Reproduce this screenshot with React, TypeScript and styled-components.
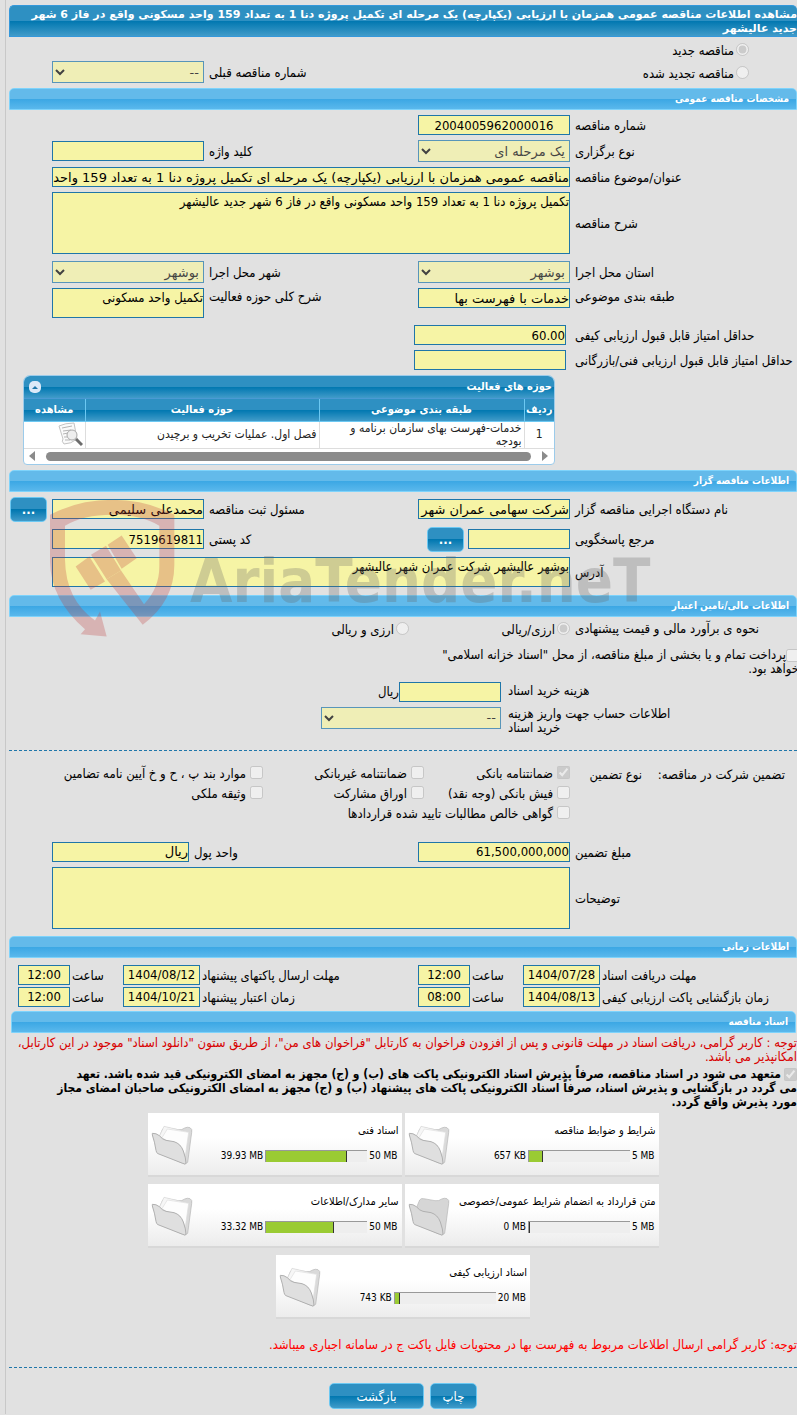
import React from 'react';
import styled, { createGlobalStyle, css } from 'styled-components';

const GlobalStyle = createGlobalStyle`
  * { box-sizing: border-box; }
  body {
    margin: 0;
    background: #e1e1e1;
    color: #000;
    font-family: 'DejaVu Sans Condensed', 'DejaVu Sans', sans-serif;
    font-size: 13px;
    line-height: 14px;
    overflow-x: hidden;
  }
  button, input, select, textarea { font-family: inherit; }
  p { margin: 0; }
`;

const darkGradient = 'linear-gradient(#2e90c2 0 50%, #0077b0 50%, #419bc9)';
const lightGradient = 'linear-gradient(#63baea 0 50%, #3ba7e4 50%, #5ab8ec)';

const Page = styled.main`
  margin-left: 5px;
  padding: 5px 0 5px 3px;
  border-left: 1px solid #c8c8c8;
`;

const PageTitle = styled.h1`
  margin: 0;
  padding: 2px 0 0;
  min-height: 32px;
  border: 1px solid #3498db;
  border-width: 1px 0 1px 1px;
  border-radius: 5px 5px 0 0;
  background: ${darkGradient};
  color: #fff;
  font-family: 'DejaVu Sans', sans-serif;
  font-size: 11px;
  line-height: 14px;
`;

const SectionTitle = styled.h2<{ $inset?: boolean }>`
  margin: ${p => (p.$inset ? '0 1px 0 2px' : '0')};
  height: 22px;
  padding: 0 7px;
  border: 1px solid #7ed3fb;
  border-radius: 5px 5px 0 0;
  background: ${lightGradient};
  color: #fff;
  font-size: 10px;
  line-height: 20px;
`;

const Stack = styled.div<{ $top?: number; $bottom?: number; $gap?: number }>`
  position: relative;
  display: flex;
  flex-direction: column;
  gap: ${p => p.$gap ?? 5}px;
  padding: ${p => p.$top ?? 5}px 0 ${p => p.$bottom ?? 5}px;
`;

const FormRow = styled.div<{ $align?: string; $after?: boolean }>`
  display: grid;
  grid-template-columns: 222px 152px minmax(0, 1fr) 152px 38px;
  column-gap: 5px;
  align-items: ${p => p.$align ?? 'center'};
  margin-bottom: ${p => (p.$after ? 2 : 0)}px;
`;

const Label = styled.label`
  text-align: left;
  padding-top: 2px;
`;

const control = css`
  width: 100%;
  margin: 0;
  border: 1px solid #1f76a9;
  border-radius: 0;
  background: #f6f4a5;
  color: #000;
`;

const Input = styled.input<{ $center?: boolean; $number?: boolean }>`
  ${control}
  display: block;
  height: 20px;
  padding: 1px 0;
  font-family: ${p => (p.$number ? 'inherit' : "'DejaVu Sans', sans-serif")};
  font-size: 13px;
  text-align: ${p => (p.$center ? 'center' : 'right')};
`;

const TextArea = styled.textarea<{ $tall?: boolean; $wide?: boolean }>`
  ${control}
  display: block;
  height: ${p => (p.$tall ? 62 : 30)}px;
  padding: 1px 0;
  resize: none;
  overflow: hidden;
  font-size: 13px;
  line-height: 15px;
  grid-column: ${p => (p.$wide ? 'span 3' : 'auto')};
`;

const WideInput = styled(Input)`
  grid-column: span 3;
`;

const ScoreInput = styled(Input)`
  margin-right: 4px;
`;

const Select = styled.select`
  ${control}
  display: block;
  height: 22px;
  font-family: 'DejaVu Sans', sans-serif;
  font-size: 13px;
`;

const ModeRow = styled.div<{ $height: number }>`
  display: flex;
  align-items: center;
  justify-content: space-between;
  min-height: ${p => p.$height}px;
  padding: 0 48px 0 43px;
`;

const Option = styled.label<{ $gap?: number; $full?: boolean }>`
  display: flex;
  align-items: center;
  gap: ${p => p.$gap ?? 2}px;
  grid-column: ${p => (p.$full ? '1 / -1' : 'auto')};
  white-space: nowrap;
`;

const Tick = styled.input`
  flex: none;
  width: 13px;
  height: 13px;
  margin: 0;
`;

const OptionText = styled.span`
  padding-top: 3px;
`;

const PreviousField = styled.div`
  display: grid;
  grid-template-columns: auto 152px;
  gap: 5px;
  align-items: center;
`;

const Button = styled.button<{ $width: number }>`
  width: ${p => p.$width}px;
  height: 26px;
  padding: 2px 0 0;
  border: 1px solid #6cc8f2;
  border-radius: 5px;
  background: ${darkGradient};
  color: #fff;
  font-size: 13px;
`;

const MoreButton = styled(Button)`
  height: 25px;
  padding: 0;
  font-weight: bold;
`;

const InputWithButton = styled.div`
  display: grid;
  grid-template-columns: 102px 37px;
  gap: 4px;
  align-items: center;
`;

const TableBox = styled.section`
  margin: 0 242px 0 14px;
  border: 1px solid #9ccbea;
  border-radius: 7px 7px 4px 4px;
  background: #fff;
  overflow: hidden;
`;

const TableTitle = styled.header`
  display: flex;
  align-items: center;
  justify-content: space-between;
  height: 23px;
  padding: 0 2px 0 5px;
  border-bottom: 1px solid #4a9ad4;
  background: ${darkGradient};
  color: #fff;
  font-size: 11px;
  font-weight: bold;
`;

const Collapse = styled.button`
  display: grid;
  place-items: center;
  width: 12px;
  height: 12px;
  padding: 0;
  border: 0;
  border-radius: 5px;
  background: #dce9f8;
`;

const Table = styled.table`
  width: 100%;
  table-layout: fixed;
  border-collapse: collapse;
  color: #222;
  font-size: 12px;
  line-height: 13px;
  th {
    height: 22px;
    padding: 0 1px;
    border-bottom: 1px solid #6cc8f2;
    background: ${darkGradient};
    color: #fff;
    font-size: 11px;
  }
  td {
    height: 27px;
    padding: 0 2px;
    border-bottom: 1px solid #ddd;
  }
  th + th { border-right: 1px solid #6cc8f2; }
  td + td { border-right: 1px solid #ddd; }
`;

const NumberCell = styled.td`
  text-align: center;
`;

const ViewCell = styled.td`
  svg {
    display: block;
  }
`;

const ScrollBar = styled.div`
  display: flex;
  align-items: center;
  gap: 11px;
  height: 15px;
  padding: 0 6px 0 5px;
`;

const ScrollThumb = styled.div`
  flex: 1;
  height: 9px;
  border-radius: 5px;
  background: #8b8b8b;
`;

const ScrollArrow = styled.span<{ $left?: boolean }>`
  border: solid transparent;
  border-width: 5px 0;
  ${p => (p.$left ? 'border-right: 6px solid #8b8b8b;' : 'border-left: 6px solid #8b8b8b;')}
`;

const Watermark = styled.div`
  position: absolute;
  z-index: 2;
  top: 1px;
  left: 31px;
  display: flex;
  align-items: flex-start;
  opacity: 0.27;
  pointer-events: none;
  direction: ltr;
`;

const WatermarkText = styled.span`
  margin: 56px 0 0 10px;
  color: #646464;
  font: bold 61px/63px 'DejaVu Sans Condensed', sans-serif;
`;

const EstimateRow = styled.div`
  display: grid;
  grid-template-columns: 222px 156px auto;
  column-gap: 5px;
  justify-content: start;
  align-items: center;
  min-height: 23px;
`;

const TreasuryNote = styled.label`
  display: block;
  width: 367px;
  margin: 5px -2px 1px 0;
  input { vertical-align: bottom; }
`;

const FeeRow = styled.div`
  display: grid;
  grid-template-columns: 289px auto auto;
  justify-content: start;
  align-items: start;
  column-gap: 7px;
`;

const FeeLabel = styled(Label)`
  padding: 0 120px 0 0;
`;

const FeeField = styled.div`
  display: flex;
  align-items: center;
`;

const FeeInput = styled(Input)`
  width: 102px;
`;

const AccountSelect = styled(Select)`
  width: 180px;
`;

const DashedLine = styled.hr`
  width: 100%;
  margin: 0;
  border: 0;
  border-top: 1px dashed #1f76a9;
`;

const Guarantee = styled.fieldset`
  display: grid;
  grid-template-columns: 127px 68px auto;
  column-gap: 16px;
  justify-content: start;
  margin: 12px 0 14px;
  padding: 0 12px 0 0;
  border: 0;
`;

const GuaranteeHead = styled.span`
  padding-top: 5px;
  white-space: nowrap;
`;

const GuaranteeOptions = styled.div`
  display: grid;
  grid-template-columns: 146px 161px auto;
  grid-auto-rows: 20px;
  margin-right: -12px;
`;

const UnitField = styled.div`
  display: grid;
  grid-template-columns: 1fr 137px;
  grid-column: span 2;
  column-gap: 5px;
  align-items: center;
`;

const DateRow = styled.div`
  display: grid;
  grid-template-columns: 195px 77px 49px 52px minmax(0, 1fr) 77px 49px 52px;
  column-gap: 2px;
  align-items: center;
  padding-left: 9px;
`;

const RedNote = styled.p<{ $bright?: boolean }>`
  color: ${p => (p.$bright ? '#f00' : '#d80000')};
`;

const Pledge = styled.label`
  display: block;
  font-size: 12px;
  font-weight: bold;
  line-height: 14px;
  input { vertical-align: bottom; margin-left: 3px; }
`;

const Cards = styled.div`
  display: flex;
  flex-wrap: wrap;
  justify-content: center;
  gap: 7px 3px;
  max-width: 520px;
  margin: 1px auto 16px;
`;

const Card = styled.article`
  display: flex;
  justify-content: space-between;
  width: 254px;
  height: 64px;
  border-bottom: 2px solid #d8d8d8;
  background: linear-gradient(#fff 40%, #ececec);
  svg { flex: none; margin: 12px 0 0 2px; }
`;

const CardBody = styled.div`
  flex: 1;
  padding: 11px 3px 0 0;
  white-space: nowrap;
`;

const CardTitle = styled.h3`
  margin: 0 0 11px;
  font-size: 11px;
  font-weight: normal;
  line-height: 14px;
`;

const Usage = styled.div`
  display: flex;
  align-items: center;
  gap: 2px;
  padding-right: 1px;
  font-size: 10px;
`;

const Meter = styled.div`
  width: 102px;
  height: 12px;
  border: solid #999;
  border-width: 1px 0 0 1px;
  background: #eee;
  direction: ltr;
`;

const MeterFill = styled.div`
  height: 100%;
  border-right: 1px solid #333;
  background: #9acb33;
`;

const Actions = styled.footer`
  display: flex;
  justify-content: center;
  gap: 6px;
`;

function Folder({ empty }: { empty?: boolean }) {
  return (
    <svg width="45" height="40" viewBox="8 34 135 120" aria-hidden="true">
      <path
        d="M36 70L46 46Q50 40 58 42L92 48Q104 50 112 43Q120 39 128 42Q136 46 133 57L121 146L112 151L34 118Z"
        fill={empty ? '#d6d6d6' : '#dadada'}
        stroke="#b5b5b5"
        strokeWidth="2"
      />
      {!empty && (
        <>
          <path d="M36 68L50 38L118 54L114 126L96 96L60 82Z" fill="#f6f6f6" stroke="#d4d4d4" strokeWidth="2" />
          <path d="M44 72L60 46L124 56L114 126L96 92L60 82Z" fill="#fdfdfd" stroke="#dedede" strokeWidth="2" />
        </>
      )}
      <path
        d="M15 59Q26 58 36 66Q46 78 56 80L80 84Q100 90 108 112Q116 134 116 150Q112 152 106 149L32 120Q27 118 26 110Q22 84 15 64Z"
        fill={empty ? '#dadada' : '#dfdfdf'}
        stroke="#b0b0b0"
        strokeWidth="3"
      />
    </svg>
  );
}

function ViewIcon() {
  return (
    <svg width="25" height="25" viewBox="0 0 25 25" role="img" aria-label="مشاهده">
      <path d="M1 4q6-3 15-3l3 16q-6 5-13 5-3-3-1-5z" fill="#fafafa" stroke="#c4c4c4" />
      <path d="M4 6l10-2M5 9l8-1M5 12l5-1M6 15l3 0M7 18l5 0" stroke="#b5b5b5" />
      <circle cx="14" cy="13" r="5" fill="#eee" stroke="#aaa" />
      <path d="M18 17l6 6" stroke="#6c6c6c" strokeWidth="3" />
    </svg>
  );
}

function Shield() {
  return (
    <svg width="140" height="147" viewBox="0 220 420 440" aria-hidden="true">
      <g fill="#c03a3a">
        <path d="M30 285Q115 240 217 240T403 285V435Q403 545 308 615L200 478 243 452 312 553Q358 505 358 440V318Q305 285 217 285T75 318V420Q77 540 165 602L180 575 200 650 122 643 135 628Q32 540 30 425Z" />
        <path d="M107 440l41-30 47 75-43 25zM153 405l45-27 45 74-43 26zM203 375l42-28 45 68-45 32z" />
      </g>
    </svg>
  );
}

type FieldProps = { id: string; label: string; value?: string; center?: boolean; number?: boolean };

function Field({ id, label, value = '', center, number }: FieldProps) {
  return (
    <>
      <Label htmlFor={id}>{label}</Label>
      <Input id={id} defaultValue={value} readOnly $center={center} $number={number} />
    </>
  );
}

function SelectField({ id, label, value }: FieldProps) {
  return (
    <>
      <Label htmlFor={id}>{label}</Label>
      <Select id={id} disabled>
        <option>{value}</option>
      </Select>
    </>
  );
}

function Check({ text, checked, full }: { text: string; checked?: boolean; full?: boolean }) {
  return (
    <Option $gap={4} $full={full}>
      <Tick type="checkbox" disabled defaultChecked={checked} />
      <OptionText>{text}</OptionText>
    </Option>
  );
}

const documents = [
  { title: 'شرایط و ضوابط مناقصه', used: '657 KB', limit: '5 MB', percent: 14 },
  { title: 'اسناد فنی', used: '39.93 MB', limit: '50 MB', percent: 80 },
  { title: 'متن قرارداد به انضمام شرایط عمومی/خصوصی', used: '0 MB', limit: '5 MB', percent: 1 },
  { title: 'سایر مدارک/اطلاعات', used: '33.32 MB', limit: '50 MB', percent: 67 },
  { title: 'اسناد ارزیابی کیفی', used: '743 KB', limit: '20 MB', percent: 5 },
];

export default function App() {
  return (
    <Page dir="rtl" lang="fa">
      <GlobalStyle />
      <PageTitle>
        مشاهده اطلاعات مناقصه عمومی همزمان با ارزیابی (یکپارچه) یک مرحله ای تکمیل پروژه دنا 1 به تعداد 159 واحد مسکونی واقع در فاز 6 شهر جدید عالیشهر
      </PageTitle>
      <ModeRow $height={24}>
        <Option>
          <Tick type="radio" name="mode" disabled defaultChecked />
          <OptionText>مناقصه جدید</OptionText>
        </Option>
      </ModeRow>
      <ModeRow $height={22}>
        <Option>
          <Tick type="radio" name="mode" disabled />
          <OptionText>مناقصه تجدید شده</OptionText>
        </Option>
        <PreviousField>
          <SelectField id="previous" label="شماره مناقصه قبلی" value="--" />
        </PreviousField>
      </ModeRow>

      <Stack $bottom={0}>
        <SectionTitle>مشخصات مناقصه عمومی</SectionTitle>
      </Stack>
      <Stack>
        <FormRow>
          <Field id="number" label="شماره مناقصه" value="2004005962000016" center number />
        </FormRow>
        <FormRow>
          <SelectField id="kind" label="نوع برگزاری" value="یک مرحله ای" />
          <Field id="keyword" label="کلید واژه" />
        </FormRow>
        <FormRow>
          <Label htmlFor="title">عنوان/موضوع مناقصه</Label>
          <WideInput id="title" readOnly defaultValue="مناقصه عمومی همزمان با ارزیابی (یکپارچه) یک مرحله ای تکمیل پروژه دنا 1 به تعداد 159 واحد" />
        </FormRow>
        <FormRow $after>
          <Label htmlFor="description">شرح مناقصه</Label>
          <TextArea id="description" $tall $wide readOnly defaultValue="تکمیل پروژه دنا 1 به تعداد 159 واحد مسکونی واقع در فاز 6 شهر جدید عالیشهر" />
        </FormRow>
        <FormRow>
          <SelectField id="province" label="استان محل اجرا" value="بوشهر" />
          <SelectField id="city" label="شهر محل اجرا" value="بوشهر" />
        </FormRow>
        <FormRow $align="start" $after>
          <Field id="category" label="طبقه بندی موضوعی" value="خدمات با فهرست بها" />
          <Label htmlFor="activity">شرح کلی حوزه فعالیت</Label>
          <TextArea id="activity" readOnly defaultValue="تکمیل واحد مسکونی" />
        </FormRow>
        <FormRow>
          <Label htmlFor="quality">حداقل امتیاز قابل قبول ارزیابی کیفی</Label>
          <ScoreInput id="quality" readOnly $number defaultValue="60.00" />
        </FormRow>
        <FormRow>
          <Label htmlFor="technical">حداقل امتیاز قابل قبول ارزیابی فنی/بازرگانی</Label>
          <ScoreInput id="technical" readOnly $number />
        </FormRow>
        <TableBox>
          <TableTitle>
            حوزه های فعالیت
            <Collapse type="button" aria-label="بستن">
              <svg width="6" height="3" viewBox="0 0 6 3" aria-hidden="true">
                <path d="M0 3L3 0l3 3z" fill="#1f76a9" />
              </svg>
            </Collapse>
          </TableTitle>
          <Table>
            <colgroup>
              <col width="30" />
              <col width="205" />
              <col />
              <col width="61" />
            </colgroup>
            <thead>
              <tr>
                <th>ردیف</th>
                <th>طبقه بندی موضوعی</th>
                <th>حوزه فعالیت</th>
                <th>مشاهده</th>
              </tr>
            </thead>
            <tbody>
              <tr>
                <NumberCell>1</NumberCell>
                <td>خدمات-فهرست بهای سازمان برنامه و بودجه</td>
                <td>فصل اول. عملیات تخریب و برچیدن</td>
                <ViewCell><ViewIcon /></ViewCell>
              </tr>
            </tbody>
          </Table>
          <ScrollBar>
            <ScrollArrow />
            <ScrollThumb />
            <ScrollArrow $left />
          </ScrollBar>
        </TableBox>
      </Stack>

      <SectionTitle>اطلاعات مناقصه گزار</SectionTitle>
      <Stack $bottom={8}>
        <FormRow>
          <Field id="agency" label="نام دستگاه اجرایی مناقصه گزار" value="شرکت سهامی عمران شهر" />
          <Field id="registrar" label="مسئول ثبت مناقصه" value="محمدعلی سلیمی" />
          <MoreButton type="button" $width={37}>...</MoreButton>
        </FormRow>
        <FormRow>
          <Label htmlFor="contact">مرجع پاسخگویی</Label>
          <InputWithButton>
            <Input id="contact" readOnly />
            <MoreButton type="button" $width={37}>...</MoreButton>
          </InputWithButton>
          <Field id="postal" label="کد پستی" value="7519619811" number />
        </FormRow>
        <FormRow>
          <Label htmlFor="address">آدرس</Label>
          <TextArea id="address" $wide readOnly defaultValue="بوشهر عالیشهر شرکت عمران شهر عالیشهر" />
        </FormRow>
        <Watermark>
          <Shield />
          <WatermarkText>AriaTender.neT</WatermarkText>
        </Watermark>
      </Stack>

      <SectionTitle>اطلاعات مالی/تامین اعتبار</SectionTitle>
      <EstimateRow>
        <Label as="span">نحوه ی برآورد مالی و قیمت پیشنهادی</Label>
        <Option>
          <Tick type="radio" name="estimate" disabled defaultChecked />
          <OptionText>ارزی/ریالی</OptionText>
        </Option>
        <Option>
          <Tick type="radio" name="estimate" disabled />
          <OptionText>ارزی و ریالی</OptionText>
        </Option>
      </EstimateRow>
      <Stack $top={3} $bottom={15}>
        <TreasuryNote>
          <Tick type="checkbox" disabled />
          پرداخت تمام و یا بخشی از مبلغ مناقصه، از محل "اسناد خزانه اسلامی" خواهد بود.
        </TreasuryNote>
        <FeeRow>
          <Label htmlFor="fee">هزینه خرید اسناد</Label>
          <FeeField>
            <FeeInput id="fee" readOnly />
            <span>ریال</span>
          </FeeField>
        </FeeRow>
        <FeeRow>
          <FeeLabel htmlFor="account">اطلاعات حساب جهت واریز هزینه خرید اسناد</FeeLabel>
          <AccountSelect id="account" disabled>
            <option>--</option>
          </AccountSelect>
        </FeeRow>
      </Stack>
      <DashedLine />
      <Guarantee>
        <GuaranteeHead>تضمین شرکت در مناقصه:</GuaranteeHead>
        <GuaranteeHead>نوع تضمین</GuaranteeHead>
        <GuaranteeOptions>
          <Check text="ضمانتنامه بانکی" checked />
          <Check text="ضمانتنامه غیربانکی" />
          <Check text="موارد بند پ ، ح و خ آیین نامه تضامین" />
          <Check text="فیش بانکی (وجه نقد)" />
          <Check text="اوراق مشارکت" />
          <Check text="وثیقه ملکی" />
          <Check text="گواهی خالص مطالبات تایید شده قراردادها" full />
        </GuaranteeOptions>
      </Guarantee>
      <Stack $bottom={7}>
        <FormRow>
          <Field id="amount" label="مبلغ تضمین" value="61,500,000,000" number />
          <UnitField>
            <Field id="unit" label="واحد پول" value="ریال" />
          </UnitField>
        </FormRow>
        <FormRow>
          <Label htmlFor="comments">توضیحات</Label>
          <TextArea id="comments" $tall $wide readOnly />
        </FormRow>
      </Stack>

      <SectionTitle>اطلاعات زمانی</SectionTitle>
      <Stack $top={7} $bottom={4} $gap={2}>
        <DateRow>
          <Field id="d1" label="مهلت دریافت اسناد" value="1404/07/28" center number />
          <Field id="t1" label="ساعت" value="12:00" center number />
          <Field id="d2" label="مهلت ارسال پاکتهای پیشنهاد" value="1404/08/12" center number />
          <Field id="t2" label="ساعت" value="12:00" center number />
        </DateRow>
        <DateRow>
          <Field id="d3" label="زمان بازگشایی پاکت ارزیابی کیفی" value="1404/08/13" center number />
          <Field id="t3" label="ساعت" value="08:00" center number />
          <Field id="d4" label="زمان اعتبار پیشنهاد" value="1404/10/21" center number />
          <Field id="t4" label="ساعت" value="12:00" center number />
        </DateRow>
      </Stack>

      <SectionTitle $inset>اسناد مناقصه</SectionTitle>
      <Stack $top={3} $bottom={15} $gap={3}>
        <RedNote>
          توجه : کاربر گرامی، دریافت اسناد در مهلت قانونی و پس از افزودن فراخوان به کارتابل "فراخوان های من"، از طریق ستون "دانلود اسناد" موجود در این کارتابل، امکانپذیر می باشد.
        </RedNote>
        <Pledge>
          <Tick type="checkbox" disabled defaultChecked />
          متعهد می شود در اسناد مناقصه، صرفاً پذیرش اسناد الکترونیکی پاکت های (ب) و (ج) مجهز به امضای الکترونیکی قید شده باشد. تعهد
          <br />
          می گردد در بازگشایی و پذیرش اسناد، صرفاً اسناد الکترونیکی پاکت های پیشنهاد (ب) و (ج) مجهز به امضای الکترونیکی صاحبان امضای مجاز
          <br />
          مورد پذیرش واقع گردد.
        </Pledge>
        <Cards>
          {documents.map(doc => (
            <Card key={doc.title}>
              <CardBody>
                <CardTitle>{doc.title}</CardTitle>
                <Usage>
                  <bdi>{doc.limit}</bdi>
                  <Meter role="meter" aria-label={doc.title} aria-valuenow={doc.percent}>
                    <MeterFill style={{ width: `${doc.percent}%` }} />
                  </Meter>
                  <bdi>{doc.used}</bdi>
                </Usage>
              </CardBody>
              <Folder empty={doc.used === '0 MB'} />
            </Card>
          ))}
        </Cards>
        <RedNote $bright>توجه: کاربر گرامی ارسال اطلاعات مربوط به فهرست بها در محتویات فایل پاکت ج در سامانه اجباری میباشد.</RedNote>
      </Stack>
      <DashedLine />
      <Stack $top={15} $bottom={0}>
        <Actions>
          <Button type="button" $width={47}>چاپ</Button>
          <Button type="button" $width={95}>بازگشت</Button>
        </Actions>
      </Stack>
    </Page>
  );
}
